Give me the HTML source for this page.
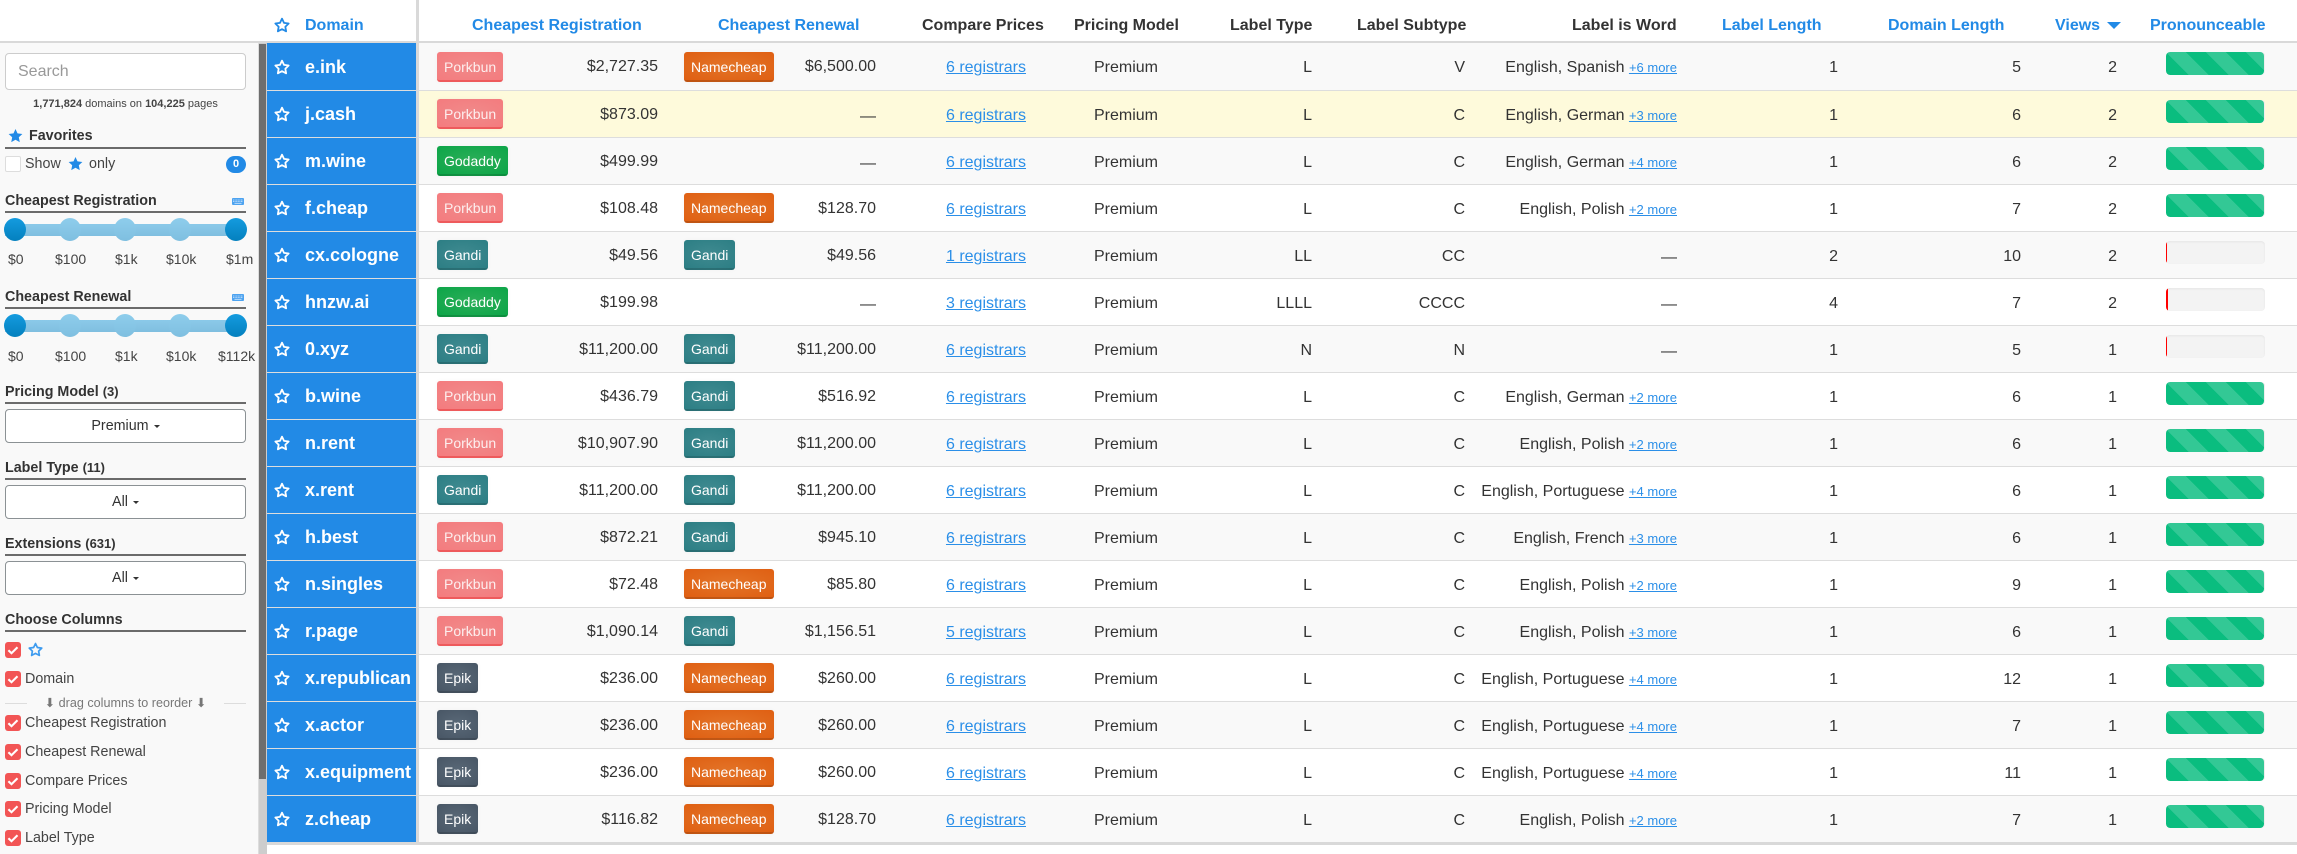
<!DOCTYPE html>
<html><head><meta charset="utf-8"><title>Domains</title>
<style>
*{box-sizing:border-box}
html,body{margin:0;padding:0;width:2297px;height:854px;overflow:hidden;background:#fff;font-family:"Liberation Sans",sans-serif;color:#333}
.abs,.h,.r,.r>span,.side>*{position:absolute}
.h{top:16px;font-weight:bold;font-size:16px;line-height:19px;white-space:nowrap;color:#333}
.h.bl{color:#228ae6}
.hb{position:absolute;left:0;top:41px;width:2297px;height:2px;background:#d9d9d9}
.vb{position:absolute;left:416px;top:0;width:3px;height:845px;background:#d9d9d9;z-index:3}
.bb{position:absolute;left:266px;top:842px;width:2031px;height:3px;background:#d9d9d9}
.r{left:0;width:2297px;height:47px;border-bottom:1px solid #ddd;background:#fff;font-size:16px;line-height:49px}
.o{background:#f9f9f9}.y{background:#fefadb}
.r>span{white-space:nowrap;top:0}
.r .bg{left:267px;width:149px;top:0;height:100%;background:#228ae6}
.r .d{left:305px;font-weight:bold;font-size:18px;color:#fff;top:-1px}
.r svg.s{position:absolute;left:274px;top:15px}
.f .d{top:0!important}.f svg.s{top:16px}
.r .b{top:8px;height:30px;line-height:30px;padding:0 7px;font-size:14px;color:#fff;border-radius:3px;border-bottom:2px solid rgba(0,0,0,.14);box-shadow:0 0 4px rgba(0,0,0,.04)}
.f .b{top:9px}
.c1{left:437px}.c2{left:684px}
.por{background:radial-gradient(ellipse at center,#f08a8a,#f47b7e);border-bottom-color:#ee5a5c!important;color:#fdeeee!important}
.nam{background:radial-gradient(ellipse at center,#e37428,#df5f12)}
.god{background:radial-gradient(ellipse at center,#2bae58,#0ca548)}
.gan{background:radial-gradient(ellipse at center,#3f8a90,#2c7e84)}
.epi{background:radial-gradient(ellipse at center,#596877,#485665)}
.r .p1{right:1639px;top:-1px}.r .p2{right:1421px;top:-1px}
.r .p2.ds{top:1px}
.r .l{right:1271px}
a,.l,.m{color:#2b8fe8;text-decoration:underline}
.r .pm{left:1026px;width:200px;text-align:center}
.r .lt{right:985px}.r .st{right:832px}
.r .w{right:620px}.r .w.ds{top:1px}.r .w i{font-style:normal;font-size:13px;color:#2b8fe8;text-decoration:underline}
.r .ll{right:459px}.r .dl{right:276px}.r .v{right:180px}
.r .bar{left:2166px;top:9px;width:99px;height:23px;border-radius:4px;background:#f3f3f3;box-shadow:inset 0 1px 2px rgba(0,0,0,.06);overflow:hidden}
.bar b{position:absolute;left:0;top:0;height:23px;display:block}
.g b{width:98px;border-radius:4px;background-color:#0abd7f;background-image:linear-gradient(45deg,rgba(255,255,255,.17) 25%,transparent 25%,transparent 50%,rgba(255,255,255,.17) 50%,rgba(255,255,255,.17) 75%,transparent 75%,transparent);background-size:40px 40px}
.t b{width:1px;background:#f00}.k b{width:2px;background:#f00}
.side{position:absolute;left:0;top:43px;width:259px;height:811px;background:#f9f9f9;border-right:1px solid #ddd;z-index:2;overflow:hidden;font-size:14.3px}
.track{position:absolute;left:259px;top:43px;width:8px;height:811px;background:#cdcdcd;z-index:2}
.thumb{position:absolute;left:0;top:1px;width:7px;height:735px;background:#6e6e6e}
.side>*{white-space:nowrap}
.hd{left:5px;font-weight:bold;line-height:18px;color:#333}
.hd small{font-size:13px}
.ul{left:5px;width:241px;height:2px;background:#6b6b6b}
.btn{left:5px;width:241px;height:34px;background:#fff;border:1px solid #8b9194;border-radius:4px;text-align:center;line-height:33px;font-size:14.3px}
.btn:after{content:"";display:inline-block;border:3.5px solid transparent;border-top:3.5px solid #333;border-bottom:0;margin-left:5px;vertical-align:2px}
.cb{left:5px;width:16px;height:16px;background:#f25555;border-radius:3px}
.lb{left:25px;line-height:18px;color:#444}
.tk{left:5px;height:12px;width:240px;background:linear-gradient(#8bc9e9,#80bfe0)}
.hn{width:22px;height:23px;border-radius:50%;background:linear-gradient(#8ecdec,#7fbfe0)}
.he{background:linear-gradient(#149bdf,#0480be)}
.tl{line-height:16px;font-size:14px;color:#444}
</style></head><body>
<svg width="0" height="0" style="position:absolute"><defs>
<symbol id="st" viewBox="0 0 24 24"><polygon points="12,2.5 15,8.8 22,9.8 17,14.6 18.2,21.5 12,18.2 5.8,21.5 7,14.6 2,9.8 9,8.8" fill="none" stroke="currentColor" stroke-width="2.7" stroke-linejoin="round"/></symbol>
<symbol id="sf" viewBox="0 0 24 24"><polygon points="12,1.5 15.2,8.5 23,9.5 17.3,14.8 18.8,22.5 12,18.8 5.2,22.5 6.7,14.8 1,9.5 8.8,8.5" fill="currentColor"/></symbol>
<symbol id="kb" viewBox="0 0 12 7"><rect width="12" height="7" rx="1" fill="#4da3f0"/><path d="M1 2h10M1 3.5h10" stroke="#d5e9fb" stroke-width=".8" stroke-dasharray="1 .6"/><path d="M2.5 5.3h7" stroke="#d5e9fb" stroke-width=".8"/></symbol>
<symbol id="ck" viewBox="0 0 16 16"><path d="M3.4 8.2l3.1 3 6-6" fill="none" stroke="#fff" stroke-width="2.1"/></symbol>
</defs></svg>

<svg class="abs" style="left:274px;top:17px;color:#228ae6" width="16" height="16"><use href="#st"/></svg>
<div class="h bl" style="left:305px">Domain</div>
<div class="h bl" style="left:472px">Cheapest Registration</div>
<div class="h bl" style="left:718px">Cheapest Renewal</div>
<div class="h" style="left:922px">Compare Prices</div>
<div class="h" style="left:1074px">Pricing Model</div>
<div class="h" style="left:1230px">Label Type</div>
<div class="h" style="left:1357px">Label Subtype</div>
<div class="h" style="left:1572px">Label is Word</div>
<div class="h bl" style="left:1722px">Label Length</div>
<div class="h bl" style="left:1888px">Domain Length</div>
<div class="h bl" style="left:2055px">Views</div>
<div class="abs" style="left:2107px;top:22px;width:0;height:0;border-left:7px solid transparent;border-right:7px solid transparent;border-top:7px solid #228ae6"></div>
<div class="h bl" style="left:2150px">Pronounceable</div>
<div class="hb"></div>

<div class="r o f" style="top:43px;height:48px"><span class="bg"></span><svg class="s" width="16" height="16" color="#fff"><use href="#st"/></svg><span class="d">e.ink</span><span class="b c1 por">Porkbun</span><span class="p1">$2,727.35</span><span class="b c2 nam">Namecheap</span><span class="p2">$6,500.00</span><span class="l">6 registrars</span><span class="pm">Premium</span><span class="lt">L</span><span class="st">V</span><span class="w">English, Spanish <i>+6 more</i></span><span class="ll">1</span><span class="dl">5</span><span class="v">2</span><span class="bar g"><b></b></span></div>

<div class="r y" style="top:91px"><span class="bg"></span><svg class="s" width="16" height="16" color="#fff"><use href="#st"/></svg><span class="d">j.cash</span><span class="b c1 por">Porkbun</span><span class="p1">$873.09</span><span class="p2 ds">—</span><span class="l">6 registrars</span><span class="pm">Premium</span><span class="lt">L</span><span class="st">C</span><span class="w">English, German <i>+3 more</i></span><span class="ll">1</span><span class="dl">6</span><span class="v">2</span><span class="bar g"><b></b></span></div>

<div class="r o" style="top:138px"><span class="bg"></span><svg class="s" width="16" height="16" color="#fff"><use href="#st"/></svg><span class="d">m.wine</span><span class="b c1 god">Godaddy</span><span class="p1">$499.99</span><span class="p2 ds">—</span><span class="l">6 registrars</span><span class="pm">Premium</span><span class="lt">L</span><span class="st">C</span><span class="w">English, German <i>+4 more</i></span><span class="ll">1</span><span class="dl">6</span><span class="v">2</span><span class="bar g"><b></b></span></div>

<div class="r" style="top:185px"><span class="bg"></span><svg class="s" width="16" height="16" color="#fff"><use href="#st"/></svg><span class="d">f.cheap</span><span class="b c1 por">Porkbun</span><span class="p1">$108.48</span><span class="b c2 nam">Namecheap</span><span class="p2">$128.70</span><span class="l">6 registrars</span><span class="pm">Premium</span><span class="lt">L</span><span class="st">C</span><span class="w">English, Polish <i>+2 more</i></span><span class="ll">1</span><span class="dl">7</span><span class="v">2</span><span class="bar g"><b></b></span></div>

<div class="r o" style="top:232px"><span class="bg"></span><svg class="s" width="16" height="16" color="#fff"><use href="#st"/></svg><span class="d">cx.cologne</span><span class="b c1 gan">Gandi</span><span class="p1">$49.56</span><span class="b c2 gan">Gandi</span><span class="p2">$49.56</span><span class="l">1 registrars</span><span class="pm">Premium</span><span class="lt">LL</span><span class="st">CC</span><span class="w ds">—</span><span class="ll">2</span><span class="dl">10</span><span class="v">2</span><span class="bar t"><b></b></span></div>

<div class="r" style="top:279px"><span class="bg"></span><svg class="s" width="16" height="16" color="#fff"><use href="#st"/></svg><span class="d">hnzw.ai</span><span class="b c1 god">Godaddy</span><span class="p1">$199.98</span><span class="p2 ds">—</span><span class="l">3 registrars</span><span class="pm">Premium</span><span class="lt">LLLL</span><span class="st">CCCC</span><span class="w ds">—</span><span class="ll">4</span><span class="dl">7</span><span class="v">2</span><span class="bar k"><b></b></span></div>

<div class="r o" style="top:326px"><span class="bg"></span><svg class="s" width="16" height="16" color="#fff"><use href="#st"/></svg><span class="d">0.xyz</span><span class="b c1 gan">Gandi</span><span class="p1">$11,200.00</span><span class="b c2 gan">Gandi</span><span class="p2">$11,200.00</span><span class="l">6 registrars</span><span class="pm">Premium</span><span class="lt">N</span><span class="st">N</span><span class="w ds">—</span><span class="ll">1</span><span class="dl">5</span><span class="v">1</span><span class="bar t"><b></b></span></div>

<div class="r" style="top:373px"><span class="bg"></span><svg class="s" width="16" height="16" color="#fff"><use href="#st"/></svg><span class="d">b.wine</span><span class="b c1 por">Porkbun</span><span class="p1">$436.79</span><span class="b c2 gan">Gandi</span><span class="p2">$516.92</span><span class="l">6 registrars</span><span class="pm">Premium</span><span class="lt">L</span><span class="st">C</span><span class="w">English, German <i>+2 more</i></span><span class="ll">1</span><span class="dl">6</span><span class="v">1</span><span class="bar g"><b></b></span></div>

<div class="r o" style="top:420px"><span class="bg"></span><svg class="s" width="16" height="16" color="#fff"><use href="#st"/></svg><span class="d">n.rent</span><span class="b c1 por">Porkbun</span><span class="p1">$10,907.90</span><span class="b c2 gan">Gandi</span><span class="p2">$11,200.00</span><span class="l">6 registrars</span><span class="pm">Premium</span><span class="lt">L</span><span class="st">C</span><span class="w">English, Polish <i>+2 more</i></span><span class="ll">1</span><span class="dl">6</span><span class="v">1</span><span class="bar g"><b></b></span></div>

<div class="r" style="top:467px"><span class="bg"></span><svg class="s" width="16" height="16" color="#fff"><use href="#st"/></svg><span class="d">x.rent</span><span class="b c1 gan">Gandi</span><span class="p1">$11,200.00</span><span class="b c2 gan">Gandi</span><span class="p2">$11,200.00</span><span class="l">6 registrars</span><span class="pm">Premium</span><span class="lt">L</span><span class="st">C</span><span class="w">English, Portuguese <i>+4 more</i></span><span class="ll">1</span><span class="dl">6</span><span class="v">1</span><span class="bar g"><b></b></span></div>

<div class="r o" style="top:514px"><span class="bg"></span><svg class="s" width="16" height="16" color="#fff"><use href="#st"/></svg><span class="d">h.best</span><span class="b c1 por">Porkbun</span><span class="p1">$872.21</span><span class="b c2 gan">Gandi</span><span class="p2">$945.10</span><span class="l">6 registrars</span><span class="pm">Premium</span><span class="lt">L</span><span class="st">C</span><span class="w">English, French <i>+3 more</i></span><span class="ll">1</span><span class="dl">6</span><span class="v">1</span><span class="bar g"><b></b></span></div>

<div class="r" style="top:561px"><span class="bg"></span><svg class="s" width="16" height="16" color="#fff"><use href="#st"/></svg><span class="d">n.singles</span><span class="b c1 por">Porkbun</span><span class="p1">$72.48</span><span class="b c2 nam">Namecheap</span><span class="p2">$85.80</span><span class="l">6 registrars</span><span class="pm">Premium</span><span class="lt">L</span><span class="st">C</span><span class="w">English, Polish <i>+2 more</i></span><span class="ll">1</span><span class="dl">9</span><span class="v">1</span><span class="bar g"><b></b></span></div>

<div class="r o" style="top:608px"><span class="bg"></span><svg class="s" width="16" height="16" color="#fff"><use href="#st"/></svg><span class="d">r.page</span><span class="b c1 por">Porkbun</span><span class="p1">$1,090.14</span><span class="b c2 gan">Gandi</span><span class="p2">$1,156.51</span><span class="l">5 registrars</span><span class="pm">Premium</span><span class="lt">L</span><span class="st">C</span><span class="w">English, Polish <i>+3 more</i></span><span class="ll">1</span><span class="dl">6</span><span class="v">1</span><span class="bar g"><b></b></span></div>

<div class="r" style="top:655px"><span class="bg"></span><svg class="s" width="16" height="16" color="#fff"><use href="#st"/></svg><span class="d">x.republican</span><span class="b c1 epi">Epik</span><span class="p1">$236.00</span><span class="b c2 nam">Namecheap</span><span class="p2">$260.00</span><span class="l">6 registrars</span><span class="pm">Premium</span><span class="lt">L</span><span class="st">C</span><span class="w">English, Portuguese <i>+4 more</i></span><span class="ll">1</span><span class="dl">12</span><span class="v">1</span><span class="bar g"><b></b></span></div>

<div class="r o" style="top:702px"><span class="bg"></span><svg class="s" width="16" height="16" color="#fff"><use href="#st"/></svg><span class="d">x.actor</span><span class="b c1 epi">Epik</span><span class="p1">$236.00</span><span class="b c2 nam">Namecheap</span><span class="p2">$260.00</span><span class="l">6 registrars</span><span class="pm">Premium</span><span class="lt">L</span><span class="st">C</span><span class="w">English, Portuguese <i>+4 more</i></span><span class="ll">1</span><span class="dl">7</span><span class="v">1</span><span class="bar g"><b></b></span></div>

<div class="r" style="top:749px"><span class="bg"></span><svg class="s" width="16" height="16" color="#fff"><use href="#st"/></svg><span class="d">x.equipment</span><span class="b c1 epi">Epik</span><span class="p1">$236.00</span><span class="b c2 nam">Namecheap</span><span class="p2">$260.00</span><span class="l">6 registrars</span><span class="pm">Premium</span><span class="lt">L</span><span class="st">C</span><span class="w">English, Portuguese <i>+4 more</i></span><span class="ll">1</span><span class="dl">11</span><span class="v">1</span><span class="bar g"><b></b></span></div>

<div class="r o" style="top:796px;border-bottom:0;height:46px"><span class="bg"></span><svg class="s" width="16" height="16" color="#fff"><use href="#st"/></svg><span class="d">z.cheap</span><span class="b c1 epi">Epik</span><span class="p1">$116.82</span><span class="b c2 nam">Namecheap</span><span class="p2">$128.70</span><span class="l">6 registrars</span><span class="pm">Premium</span><span class="lt">L</span><span class="st">C</span><span class="w">English, Polish <i>+2 more</i></span><span class="ll">1</span><span class="dl">7</span><span class="v">1</span><span class="bar g"><b></b></span></div>

<div class="bb"></div><div class="vb"></div>
<div class="track"><div class="thumb"></div></div>

<div class="side">
<div style="left:5px;top:10px;width:241px;height:37px;background:#fff;border:1px solid #ccc;border-radius:4px;padding-left:12px;line-height:35px;font-size:16px;color:#999">Search</div>
<div style="left:0;width:251px;text-align:center;top:54px;font-size:11px;line-height:14px;color:#444"><b>1,771,824</b> domains on <b>104,225</b> pages</div>

<svg style="left:8px;top:85px;color:#228ae6" width="15" height="15"><use href="#sf"/></svg>
<div class="hd" style="left:29px;top:84px">Favorites</div>
<div class="ul" style="top:104px"></div>
<div style="left:5px;top:113px;width:16px;height:16px;background:#fff;border:1px solid #ddd;border-radius:2px"></div>
<div class="lb" style="top:112px">Show</div>
<svg style="left:68px;top:113px;color:#228ae6" width="15" height="15"><use href="#sf"/></svg>
<div class="lb" style="left:89px;top:112px">only</div>
<div style="left:226px;top:113px;width:20px;height:17px;border-radius:9px;background:#228ae6;color:#fff;font-weight:bold;font-size:11px;line-height:17px;text-align:center">0</div>

<div class="hd" style="top:149px">Cheapest Registration</div>
<svg style="left:232px;top:155px" width="12" height="7"><use href="#kb"/></svg>
<div class="ul" style="top:168px"></div>
<div class="tk" style="top:181px"></div>
<div class="hn he" style="left:4px;top:175px"></div>
<div class="hn" style="left:59px;top:175px"></div>
<div class="hn" style="left:114px;top:175px"></div>
<div class="hn" style="left:169px;top:175px"></div>
<div class="hn he" style="left:225px;top:175px"></div>
<div class="tl" style="left:8px;top:208px">$0</div>
<div class="tl" style="left:55px;top:208px">$100</div>
<div class="tl" style="left:115px;top:208px">$1k</div>
<div class="tl" style="left:166px;top:208px">$10k</div>
<div class="tl" style="left:226px;top:208px">$1m</div>

<div class="hd" style="top:245px">Cheapest Renewal</div>
<svg style="left:232px;top:251px" width="12" height="7"><use href="#kb"/></svg>
<div class="ul" style="top:264px"></div>
<div class="tk" style="top:277px"></div>
<div class="hn he" style="left:4px;top:271px"></div>
<div class="hn" style="left:59px;top:271px"></div>
<div class="hn" style="left:114px;top:271px"></div>
<div class="hn" style="left:169px;top:271px"></div>
<div class="hn he" style="left:225px;top:271px"></div>
<div class="tl" style="left:8px;top:305px">$0</div>
<div class="tl" style="left:55px;top:305px">$100</div>
<div class="tl" style="left:115px;top:305px">$1k</div>
<div class="tl" style="left:166px;top:305px">$10k</div>
<div class="tl" style="left:218px;top:305px">$112k</div>

<div class="hd" style="top:340px">Pricing Model <small>(3)</small></div>
<div class="ul" style="top:359px"></div>
<div class="btn" style="top:366px">Premium</div>
<div class="hd" style="top:416px">Label Type <small>(11)</small></div>
<div class="ul" style="top:435px"></div>
<div class="btn" style="top:442px">All</div>
<div class="hd" style="top:492px">Extensions <small>(631)</small></div>
<div class="ul" style="top:511px"></div>
<div class="btn" style="top:518px">All</div>

<div class="hd" style="top:568px">Choose Columns</div>
<div class="ul" style="top:587px"></div>
<div class="cb" style="top:599px"><svg width="16" height="16"><use href="#ck"/></svg></div>
<svg style="left:28px;top:599px;color:#3d9bef" width="15" height="15"><use href="#st"/></svg>
<div class="cb" style="top:628px"><svg width="16" height="16"><use href="#ck"/></svg></div>
<div class="lb" style="top:627px">Domain</div>
<div style="left:5px;top:660px;width:22px;height:1px;background:#ddd"></div>
<div style="left:224px;top:660px;width:22px;height:1px;background:#ddd"></div>
<div style="left:0;width:251px;text-align:center;top:653px;font-size:12.6px;line-height:15px;color:#777">⬇ drag columns to reorder ⬇</div>
<div class="cb" style="top:672px"><svg width="16" height="16"><use href="#ck"/></svg></div>
<div class="lb" style="top:671px">Cheapest Registration</div>
<div class="cb" style="top:701px"><svg width="16" height="16"><use href="#ck"/></svg></div>
<div class="lb" style="top:700px">Cheapest Renewal</div>
<div class="cb" style="top:730px"><svg width="16" height="16"><use href="#ck"/></svg></div>
<div class="lb" style="top:729px">Compare Prices</div>
<div class="cb" style="top:758px"><svg width="16" height="16"><use href="#ck"/></svg></div>
<div class="lb" style="top:757px">Pricing Model</div>
<div class="cb" style="top:787px"><svg width="16" height="16"><use href="#ck"/></svg></div>
<div class="lb" style="top:786px">Label Type</div>
</div>
</body></html>
